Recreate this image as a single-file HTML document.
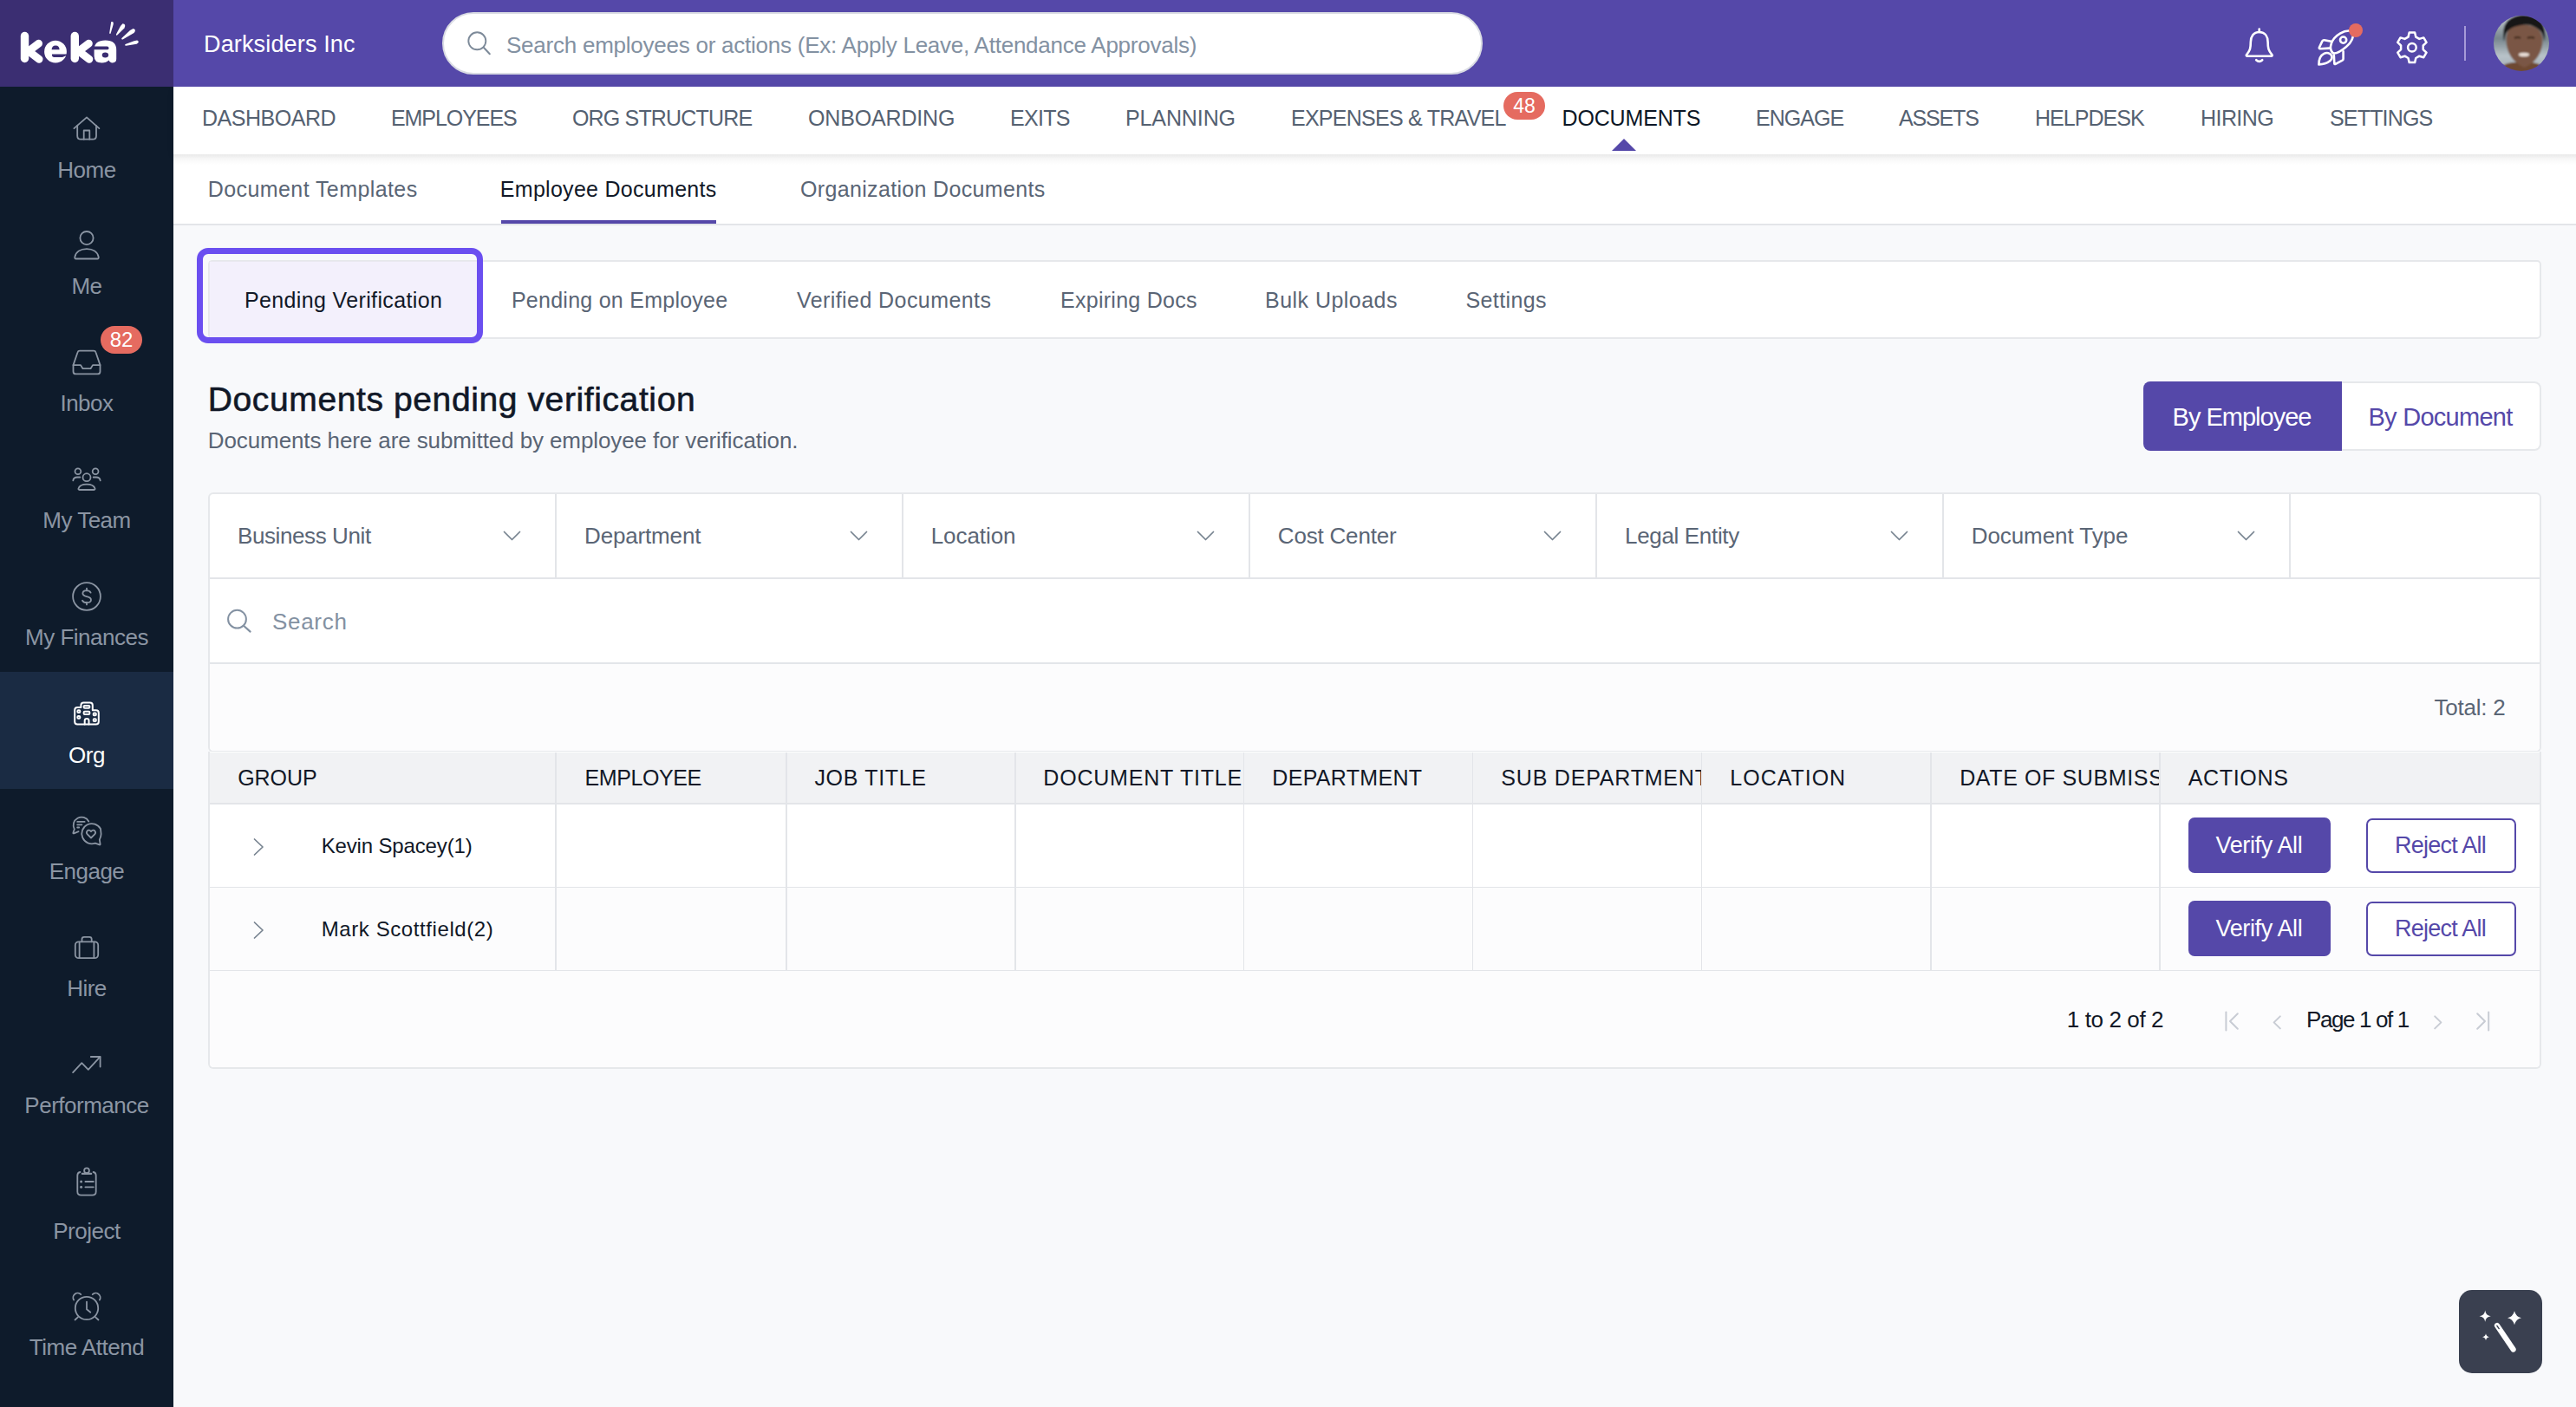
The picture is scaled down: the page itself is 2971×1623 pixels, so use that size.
<!DOCTYPE html>
<html>
<head>
<meta charset="utf-8">
<style>
*{box-sizing:border-box;margin:0;padding:0}
html,body{width:2971px;height:1623px;overflow:hidden}
body{position:relative;background:#f8f9fb;font-family:"Liberation Sans",sans-serif;color:#111827}
.a{position:absolute;white-space:nowrap}
.logo{left:0;top:0;width:200px;height:100px;background:#3b2e72}
.hdr{left:200px;top:0;width:2771px;height:100px;background:#5548a9}
.side{left:0;top:100px;width:200px;height:1523px;background:#0e1b2b}
.si{position:absolute;left:0;width:200px;height:135px}
.si.act{background:#1a2b43}
.si svg{position:absolute;left:80px;top:30px;width:40px;height:40px;overflow:visible}
.lb{position:absolute;left:0;width:200px;text-align:center;font-size:26px;line-height:26px;color:#8b95a3;letter-spacing:-0.5px;white-space:nowrap}
.nav{left:200px;top:100px;width:2771px;height:78px;background:#fff;box-shadow:0 3px 8px rgba(0,0,0,0.07)}
.nv{position:absolute;top:123px;font-size:25px;line-height:25px;color:#4f5b6b;letter-spacing:-0.6px}
.sub{left:200px;top:178px;width:2771px;height:82px;background:#fff;border-bottom:2px solid #e3e5e9}
.st{position:absolute;top:206px;font-size:25px;line-height:25px;color:#556070}
.line{position:absolute;background:#e3e5e9}
</style>
</head>
<body>
<div class="a logo">
<svg width="200" height="100" viewBox="0 0 200 100" style="position:absolute;left:0;top:0">
<g fill="#fff">
<rect x="23.8" y="36.8" width="9.4" height="35.4" rx="4.7"/>
<rect x="81.6" y="36.8" width="9.4" height="35.4" rx="4.7"/>
<ellipse cx="64" cy="59.7" rx="12.9" ry="12.9"/>
<path d="M108.6 57 Q109 46.6 121.5 46.6 Q134.2 46.6 134.2 57.5 V68 Q134.2 72.4 129.8 72.4 Q126.4 72.4 125.6 69.6 Q122.5 72.6 117.5 72.6 Q108.6 72.6 108.6 64.5 Z"/>
</g>
<g fill="none" stroke="#fff" stroke-linecap="round" stroke-linejoin="round" stroke-width="9">
<polyline points="44.5,50.2 33,59 45,68.2"/>
<polyline points="102.3,50.2 90.8,59 102.8,68.2"/>
</g>
<g fill="#3b2e72">
<path d="M59.6 57.3 Q59.8 52.4 64.2 52.4 Q68.4 52.4 68.6 57.3 Z"/>
<path d="M60 62.4 H78 V63.4 L72 65.9 H62 Q60 65.9 60 64.1 Z"/>
<path d="M107 53.4 H123.5 Q125.5 53.6 125.5 55.4 Q125.5 57.3 123.5 57.3 H107 Z"/>
<ellipse cx="121.4" cy="63.6" rx="3.7" ry="3"/>
</g>
<g fill="#fff">
<path d="M128.2 25.2 Q131.5 24.6 130.6 28.6 L127.6 38.4 Q126.6 39.6 126.2 38 Z"/>
<path d="M141.5 27.3 Q145.8 27.6 143.4 32.4 L135.2 40.5 Q133.6 41.2 134 39.4 L139 30 Z"/>
<path d="M153.6 33 Q157.8 34 154.5 38 L141.6 45.4 Q139.4 45.8 140.4 44 L150 35 Z"/>
<path d="M158.2 46.6 Q161.8 48.4 157.6 50.8 L145.4 52.8 Q143.2 52.4 144.6 51 L154.6 47.2 Z"/>
</g>
</svg>
</div>
<div class="a hdr">
<div class="a" style="left:35px;top:37.5px;font-size:27px;line-height:27px;color:#fff;letter-spacing:0.15px">Darksiders Inc</div>
<div class="a" style="left:310px;top:14px;width:1200px;height:72px;border-radius:36px;background:#fff;border:2px solid #d9dbe3"></div>
<svg class="a" style="left:337px;top:34px" width="32" height="32" viewBox="0 0 32 32"><circle cx="13.3" cy="13.3" r="10" fill="none" stroke="#7d8a99" stroke-width="1.9"/><line x1="20.8" y1="20.8" x2="27.8" y2="28.2" stroke="#7d8a99" stroke-width="2" stroke-linecap="round"/></svg>
<div class="a" style="left:384px;top:39px;font-size:26px;line-height:26px;color:#8391a2;letter-spacing:-0.24px">Search employees or actions (Ex: Apply Leave, Attendance Approvals)</div>
<!-- bell -->
<svg class="a" style="left:2385px;top:28px" width="44" height="50" viewBox="0 0 44 50" fill="none" stroke="#fff" stroke-width="2.6" stroke-linecap="round" stroke-linejoin="round">
<line x1="20.7" y1="5.5" x2="20.7" y2="9"/>
<path d="M20.7 9 C13.8 9 10.8 14.5 10.8 20.5 C10.8 27.5 10.2 30 6 35.2 Q5.2 36.8 7 36.8 H34.4 Q36.2 36.8 35.4 35.2 C31.2 30 30.6 27.5 30.6 20.5 C30.6 14.5 27.6 9 20.7 9 Z"/>
<path d="M17.2 41.2 Q20.7 44.6 24.2 41.2"/>
</svg>
<!-- rocket -->
<svg class="a" style="left:2470px;top:28px" width="56" height="52" viewBox="0 0 56 52" fill="none" stroke="#fff" stroke-width="2.6" stroke-linejoin="round" stroke-linecap="round">
<path d="M20.5 33 C15.5 28 18 17 28.9 10.6 C34 7.5 40 7 43.4 8.3 C45.5 14 42 21 36 26 C30 31 24 35 20.5 33 Z"/>
<circle cx="32.6" cy="18.1" r="3.6"/>
<path d="M18.6 19.8 L10.6 18.3 Q9.2 18.1 8.4 19.4 L4.9 26.8 Q4.4 28.2 5.9 28.2 L16.2 27.6"/>
<path d="M32.6 31.2 L32.6 39.8 Q32.5 41 31.5 41.6 L23.6 45.8 Q22.4 46.4 22.3 45.1 L21.8 35.6"/>
<path d="M4.4 46.4 C4.4 41 6 36 10.3 33.9 C13.5 32.3 17.5 33 19 35.8 C20 38.5 19 41 16.8 42.6 C14 45 9.5 46.4 4.4 46.4 Z"/>
</svg>
<div class="a" style="left:2509px;top:27px;width:16px;height:16px;border-radius:8px;background:#e56b60"></div>
<!-- gear -->
<svg class="a" style="left:2562px;top:34px" width="40" height="40" viewBox="0 0 40 40" fill="none" stroke="#fff" stroke-width="2.5" stroke-linejoin="round">
<path d="M16.7 3.5 H23.1 L24.3 8.6 L28.3 10.9 L33.3 9.4 L36.5 14.9 L32.7 18.5 V23.1 L36.5 26.7 L33.3 32.2 L28.3 30.7 L24.3 33 L23.1 38.1 H16.7 L15.5 33 L11.5 30.7 L6.5 32.2 L3.3 26.7 L7.1 23.1 V18.5 L3.3 14.9 L6.5 9.4 L11.5 10.9 L15.5 8.6 Z"/>
<circle cx="19.9" cy="20.8" r="4.8"/>
</svg>
<div class="a" style="left:2642px;top:30px;width:2px;height:40px;background:#a69ad8"></div>
<!-- avatar -->
<svg class="a" style="left:2676px;top:18px" width="64" height="64" viewBox="0 0 64 64">
<defs><clipPath id="av"><circle cx="32" cy="32" r="32"/></clipPath>
<filter id="avb" x="-10%" y="-10%" width="120%" height="120%"><feGaussianBlur stdDeviation="0.8"/></filter><linearGradient id="avbg" x1="0" y1="0" x2="0" y2="1"><stop offset="0" stop-color="#d4dadd"/><stop offset="0.42" stop-color="#76858c"/><stop offset="0.7" stop-color="#b9c3c9"/><stop offset="1" stop-color="#9aa6ad"/></linearGradient></defs>
<g clip-path="url(#av)"><g filter="url(#avb)">
<rect x="-4" y="-4" width="72" height="72" fill="url(#avbg)"/>
<path d="M4 66 Q8 55 22 54 L44 54 Q58 55 62 66 Z" fill="#6e4a30"/>
<path d="M14.5 26 Q15 11 34 10.5 Q54 11 56.5 26 Q57 50 35.5 60 Q14 50 14.5 26 Z" fill="#7a5744"/>
<path d="M12 30 Q9 14 16 6 Q24 -1 34 -1 Q48 -1 55 7 Q61 15 58.7 30 Q57 19 51.8 15.9 Q42 9 33.6 10.8 Q22 12 16.6 17.6 Q13 21 12 30 Z" fill="#141414"/>
<path d="M24 26 Q28 24 31 26 M39 26 Q43 24 47 26" stroke="#3a2418" stroke-width="2" fill="none"/>
<ellipse cx="35" cy="45" rx="6.2" ry="2.3" fill="#e8ddd6"/>
</g></g>
</svg>
</div>
<div class="a side">
<div class="si act" style="top:675px"></div>
<svg class="a" style="left:0;top:-100px" width="200" height="1623" viewBox="0 0 200 1623" fill="none" stroke="#8b95a3" stroke-width="1.8" stroke-linecap="round" stroke-linejoin="round">
<!-- home -->
<path d="M85.4 148.1 L100 135.4 L114.4 148.1"/>
<path d="M89.2 145 V156.7 Q89.2 160.7 93.2 160.7 H107 Q111 160.7 111 156.7 V145"/>
<path d="M96.7 160.7 V150.5 H103.3 V160.7"/>
<!-- me -->
<circle cx="100" cy="274.6" r="7.6"/>
<path d="M87.6 298.5 H112.4 Q114 298.5 113.7 296.5 C112.5 290.5 107 287.2 100 287.2 C93 287.2 87.5 290.5 86.3 296.5 Q86 298.5 87.6 298.5 Z"/>
<!-- inbox -->
<path d="M84.5 421.1 L89.5 406.5 Q90 404.7 92 404.7 H108 Q110 404.7 110.5 406.5 L115.5 421.1 V428.4 Q115.5 431.4 112.5 431.4 H87.5 Q84.5 431.4 84.5 428.4 Z"/>
<path d="M84.5 421.1 H93 L95.5 425.2 H104.5 L107 421.1 H115.5"/>
<!-- my team -->
<circle cx="89.9" cy="543.7" r="3.4"/>
<circle cx="110.1" cy="543.7" r="3.4"/>
<circle cx="100" cy="550.7" r="4.5"/>
<path d="M91.5 565 H108.5 Q109.8 565 109.5 563.5 C108.5 560 105 558.6 100 558.6 C95 558.6 91.5 560 90.5 563.5 Q90.2 565 91.5 565 Z"/>
<path d="M84.3 554.3 Q84.8 550.5 89 550.5 H92.3"/>
<path d="M115.7 554.3 Q115.2 550.5 111 550.5 H107.7"/>
<!-- finances -->
<circle cx="100" cy="688" r="15.9"/>
<path d="M100 678.6 V681.4 M100 694.6 V697.4"/>
<path d="M104.6 683.6 Q103.2 681.2 100 681.2 Q95.4 681.2 95.4 684.6 Q95.4 687.2 100 688.2 Q105 689.3 105 692 Q105 695.2 100 695.2 Q96.3 695.2 95 692.8"/>
<!-- engage -->
<path d="M102.3 947.5 A9.2 9.2 0 1 0 85.8 956.5 L84.4 960.6 Q84.2 961.6 85.2 961.3 L90.6 959.2"/>
<path d="M89.2 947.9 H97.6 M89.2 951.3 H94.4 M89.2 954.5 H91.2"/>
<path d="M116 956 A11.6 11.6 0 1 0 109.8 972.6 L114.6 974.4 Q115.8 974.8 115.6 973.6 L114.8 968.6 Q116.6 965 116.6 962 Z" />
<path d="M105 966.5 L100.8 962.3 Q99 960.3 100.6 958.5 Q102.6 956.6 105 959.2 Q107.4 956.6 109.4 958.5 Q111 960.3 109.2 962.3 Z"/>
<!-- hire -->
<rect x="86.8" y="1086.3" width="26.4" height="18.9" rx="4"/>
<path d="M94.5 1086.3 V1083.3 Q94.5 1080.8 97 1080.8 H103.2 Q105.7 1080.8 105.7 1083.3 V1086.3"/>
<path d="M91.6 1086.6 V1105 M108.4 1086.6 V1105"/>
<!-- performance -->
<polyline points="84.1,1237.1 94.3,1226.2 101.8,1233.9 115.4,1219.2"/>
<path d="M104.8 1219 H115.6 V1230.5"/>
<!-- project -->
<path d="M92.4 1352 Q89.3 1352.4 89.3 1356 V1374.5 Q89.3 1378.7 93.5 1378.7 H106.5 Q110.7 1378.7 110.7 1374.5 V1356 Q110.7 1352.4 107.6 1352"/>
<circle cx="100" cy="1350.2" r="2.9"/>
<path d="M94.8 1353.9 H105.2" stroke-width="2.2"/>
<path d="M98.4 1363 H107.8 M98.4 1369.3 H107.8"/>
<circle cx="93.6" cy="1363" r="1.5" fill="#8b95a3" stroke="none"/>
<circle cx="93.6" cy="1369.3" r="1.5" fill="#8b95a3" stroke="none"/>
<!-- time attend -->
<circle cx="100" cy="1509" r="13.2"/>
<path d="M85.1 1499.5 A5.2 5.2 0 0 1 93.3 1493.2 M114.9 1499.5 A5.2 5.2 0 0 0 106.7 1493.2"/>
<path d="M100 1501.6 V1510.3 L104.3 1513.7"/>
<path d="M86.5 1522.5 L89.9 1519.3 M113.5 1522.5 L110.1 1519.3"/>
</svg>
<svg class="a" style="left:0;top:-100px" width="200" height="1000" viewBox="0 0 200 1000" fill="none" stroke="#fff" stroke-width="2" stroke-linecap="round" stroke-linejoin="round">
<path d="M93.4 816 V813.5 Q93.4 810.5 96.4 810.5 H103.8 Q106.8 810.5 106.8 813.5 V819.2 H110.8 Q113.8 819.2 113.8 822.2 V832.6 Q113.8 835.6 110.8 835.6 H89.2 Q86.2 835.6 86.2 832.6 V819 Q86.2 816 89.2 816 Z"/>
<rect x="96.6" y="814.1" width="6.8" height="2.7" rx="1.2"/>
<rect x="96.6" y="820.7" width="6.8" height="3.2" rx="1.2"/>
<rect x="89.4" y="819.2" width="2.9" height="2.7" rx="1"/>
<rect x="89.4" y="825.9" width="2.9" height="2.9" rx="1"/>
<rect x="107.7" y="822.4" width="3.1" height="2.9" rx="1"/>
<rect x="107.7" y="829.3" width="3.1" height="2.7" rx="1"/>
<path d="M97.7 835.6 V831.3 Q97.7 829 100.1 829 Q102.5 829 102.5 831.3 V835.6"/>
</svg>
<div class="a" style="left:116px;top:275.6px;width:48px;height:32px;border-radius:16px;background:#e56b60;color:#fff;font-size:24px;line-height:32px;text-align:center">82</div>
<div class="lb" style="top:82.5px">Home</div>
<div class="lb" style="top:217px">Me</div>
<div class="lb" style="top:352px">Inbox</div>
<div class="lb" style="top:487px">My Team</div>
<div class="lb" style="top:622.4px">My Finances</div>
<div class="lb" style="top:758px;color:#fff">Org</div>
<div class="lb" style="top:892px">Engage</div>
<div class="lb" style="top:1027px">Hire</div>
<div class="lb" style="top:1162px">Performance</div>
<div class="lb" style="top:1306.8px">Project</div>
<div class="lb" style="top:1440.7px">Time Attend</div>
</div>
<div class="a nav"></div>
<div class="a" style="left:1859px;top:160px;width:0;height:0;border-left:14px solid transparent;border-right:14px solid transparent;border-bottom:14px solid #5548a9"></div>
<div class="a" style="left:1734px;top:106px;width:48px;height:32px;border-radius:16px;background:#e56b60;color:#fff;font-size:23px;line-height:33px;text-align:center">48</div>
<div class="a sub"></div>
<div class="a" style="left:200px;top:178px;width:2771px;height:12px;background:linear-gradient(rgba(0,0,0,0.085),rgba(0,0,0,0.03) 45%,rgba(0,0,0,0))"></div>
<div class="a" style="left:578px;top:254px;width:248px;height:4px;background:#5548a9"></div>
<!-- tab strip -->
<div class="a" style="left:240px;top:300px;width:2691px;height:91px;background:#fff;border:2px solid #e6e8eb;border-radius:5px"></div>
<div class="a" style="left:241px;top:301px;width:309px;height:89px;background:#f3f0fc;border-top:1.5px solid #e9e8ef;border-left:1.5px solid #e9e8ef"></div>
<div class="a" style="left:227px;top:286px;width:329.5px;height:110px;border:7px solid #6b4ff0;border-radius:13px"></div>
<!-- toggle -->
<div class="a" style="left:2472px;top:440px;width:229px;height:80px;background:#5548a9;border-radius:8px 0 0 8px"></div>
<div class="a" style="left:2701px;top:440px;width:230px;height:80px;background:#fff;border:2px solid #e6e8eb;border-left:none;border-radius:0 8px 8px 0"></div>
<!-- filter panel -->
<div class="a" style="left:240px;top:568px;width:2691px;height:300px;background:#fff;border:2px solid #e6e8eb;border-radius:6px"></div>
<div class="line" style="left:242px;top:665.5px;width:2687px;height:2px"></div>
<div class="a" style="left:242px;top:765px;width:2687px;height:101px;background:#fcfcfd;border-radius:0 0 5px 5px"></div>
<div class="line" style="left:242px;top:763.5px;width:2687px;height:2px"></div>
<div class="line" style="left:640px;top:570px;width:2px;height:96px"></div>
<div class="line" style="left:1040px;top:570px;width:2px;height:96px"></div>
<div class="line" style="left:1440px;top:570px;width:2px;height:96px"></div>
<div class="line" style="left:1840px;top:570px;width:2px;height:96px"></div>
<div class="line" style="left:2240px;top:570px;width:2px;height:96px"></div>
<div class="line" style="left:2640px;top:570px;width:2px;height:96px"></div>
<svg class="a" style="left:0;top:0" width="2971" height="1623" viewBox="0 0 2971 1623" fill="none" stroke="#76828f" stroke-width="1.7" stroke-linecap="round" stroke-linejoin="round">
<polyline points="581.5,613.5 590.5,622.5 599.5,613.5"/>
<polyline points="981.5,613.5 990.5,622.5 999.5,613.5"/>
<polyline points="1381.5,613.5 1390.5,622.5 1399.5,613.5"/>
<polyline points="1781.5,613.5 1790.5,622.5 1799.5,613.5"/>
<polyline points="2181.5,613.5 2190.5,622.5 2199.5,613.5"/>
<polyline points="2581.5,613.5 2590.5,622.5 2599.5,613.5"/>
</svg>
<svg class="a" style="left:258px;top:700px" width="36" height="32" viewBox="0 0 36 32"><circle cx="15.5" cy="14.2" r="10.4" fill="none" stroke="#8391a2" stroke-width="2"/><line x1="23" y1="21.8" x2="30.6" y2="28.6" stroke="#8391a2" stroke-width="2.2" stroke-linecap="round"/></svg>
<!-- table -->
<div class="a" style="left:240px;top:867px;width:2691px;height:366px;background:#fff;border:2px solid #e6e8eb;border-top:none;border-radius:0 0 6px 6px"></div>
<div class="a" style="left:242px;top:867.5px;width:2687px;height:59px;background:#f1f2f4"></div>
<div class="a" style="left:242px;top:1023px;width:2687px;height:208px;background:#fcfcfd;border-radius:0 0 5px 5px"></div>
<div class="line" style="left:242px;top:926px;width:2687px;height:1.5px"></div>
<div class="line" style="left:242px;top:1022.5px;width:2687px;height:1.5px"></div>
<div class="line" style="left:242px;top:1118.5px;width:2687px;height:1.5px"></div>
<div class="line" style="left:640px;top:867.5px;width:1.5px;height:252px"></div>
<div class="line" style="left:906px;top:867.5px;width:1.5px;height:252px"></div>
<div class="line" style="left:1170px;top:867.5px;width:1.5px;height:252px"></div>
<div class="line" style="left:1433.5px;top:867.5px;width:1.5px;height:252px"></div>
<div class="line" style="left:1697.5px;top:867.5px;width:1.5px;height:252px"></div>
<div class="line" style="left:1961.5px;top:867.5px;width:1.5px;height:252px"></div>
<div class="line" style="left:2226px;top:867.5px;width:1.5px;height:252px"></div>
<div class="line" style="left:2490px;top:867.5px;width:1.5px;height:252px"></div>
<svg class="a" style="left:0;top:0" width="2971" height="1623" viewBox="0 0 2971 1623" fill="none" stroke-linecap="round" stroke-linejoin="round">
<polyline points="293.5,968 303,977 293.5,986" stroke="#76828f" stroke-width="1.7"/>
<polyline points="293.5,1064 303,1073 293.5,1082" stroke="#76828f" stroke-width="1.7"/>
<g stroke="#c8ccd4" stroke-width="2">
<line x1="2567.4" y1="1167.4" x2="2567.4" y2="1188.6"/>
<polyline points="2580.8,1169.2 2572,1178 2580.8,1186.8"/>
<polyline points="2629.8,1172.4 2622.6,1179.4 2629.8,1186.4"/>
<polyline points="2808.2,1172.4 2815.4,1179.4 2808.2,1186.4"/>
<polyline points="2857.2,1169.2 2866,1178 2857.2,1186.8"/>
<line x1="2870.2" y1="1167.4" x2="2870.2" y2="1188.6"/>
</g>
</svg>
<div class="a" style="left:2524px;top:943px;width:164px;height:63.5px;background:#5548a9;border-radius:7px"></div>
<div class="a" style="left:2728.5px;top:943.5px;width:173px;height:63px;border:2px solid #5548a9;border-radius:7px;background:#fff"></div>
<div class="a" style="left:2524px;top:1039px;width:164px;height:63.5px;background:#5548a9;border-radius:7px"></div>
<div class="a" style="left:2728.5px;top:1039.5px;width:173px;height:63px;border:2px solid #5548a9;border-radius:7px;background:#fff"></div>
<!-- fab -->
<div class="a" style="left:2836px;top:1488px;width:96px;height:96px;border-radius:15px;background:#3a4050"></div>
<svg class="a" style="left:2836px;top:1488px" width="96" height="96" viewBox="0 0 96 96">
<g fill="#fff">
<path d="M30.2 23.6 Q30.8 29.6 36.8 30.2 Q30.8 30.8 30.2 36.8 Q29.6 30.8 23.6 30.2 Q29.6 29.6 30.2 23.6 Z"/>
<path d="M64 24.3 Q65.5 30.8 72 32.3 Q65.5 33.8 64 40.3 Q62.5 33.8 56 32.3 Q62.5 30.8 64 24.3 Z"/>
<path d="M31 50.2 Q31.5 53.7 35 54.2 Q31.5 54.7 31 58.2 Q30.5 54.7 27 54.2 Q30.5 53.7 31 50.2 Z"/>
</g>
<line x1="44" y1="41" x2="62.6" y2="68.6" stroke="#fff" stroke-width="6.2" stroke-linecap="round"/>
<line x1="43.9" y1="41.3" x2="46.2" y2="44.6" stroke="#3a4050" stroke-width="1.4" stroke-linecap="round"/>
</svg>
<!--TEXT-->
<div class="a" style="left:233.0px;top:123.7px;font-size:25px;line-height:25px;color:#556171;letter-spacing:-0.48px">DASHBOARD</div>
<div class="a" style="left:451.0px;top:123.7px;font-size:25px;line-height:25px;color:#556171;letter-spacing:-1.07px">EMPLOYEES</div>
<div class="a" style="left:659.9px;top:123.7px;font-size:25px;line-height:25px;color:#556171;letter-spacing:-0.81px">ORG STRUCTURE</div>
<div class="a" style="left:932.0px;top:123.7px;font-size:25px;line-height:25px;color:#556171;letter-spacing:-0.16px">ONBOARDING</div>
<div class="a" style="left:1165.0px;top:123.7px;font-size:25px;line-height:25px;color:#556171;letter-spacing:-0.70px">EXITS</div>
<div class="a" style="left:1298.0px;top:123.7px;font-size:25px;line-height:25px;color:#556171;letter-spacing:-0.11px">PLANNING</div>
<div class="a" style="left:1489.0px;top:123.7px;font-size:25px;line-height:25px;color:#556171;letter-spacing:-0.74px">EXPENSES &amp; TRAVEL</div>
<div class="a" style="left:1801.5px;top:123.7px;font-size:25px;line-height:25px;color:#0d1726;letter-spacing:-0.16px">DOCUMENTS</div>
<div class="a" style="left:2025.0px;top:123.7px;font-size:25px;line-height:25px;color:#556171;letter-spacing:-0.96px">ENGAGE</div>
<div class="a" style="left:2190.0px;top:123.7px;font-size:25px;line-height:25px;color:#556171;letter-spacing:-1.16px">ASSETS</div>
<div class="a" style="left:2347.0px;top:123.7px;font-size:25px;line-height:25px;color:#556171;letter-spacing:-0.97px">HELPDESK</div>
<div class="a" style="left:2538.0px;top:123.7px;font-size:25px;line-height:25px;color:#556171;letter-spacing:-0.56px">HIRING</div>
<div class="a" style="left:2687.0px;top:123.7px;font-size:25px;line-height:25px;color:#556171;letter-spacing:-0.83px">SETTINGS</div>
<div class="a" style="left:239.8px;top:205.9px;font-size:25px;line-height:25px;color:#5a6575;letter-spacing:0.41px">Document Templates</div>
<div class="a" style="left:576.8px;top:205.9px;font-size:25px;line-height:25px;color:#111827;letter-spacing:0.29px">Employee Documents</div>
<div class="a" style="left:923.0px;top:205.9px;font-size:25px;line-height:25px;color:#5a6575;letter-spacing:0.34px">Organization Documents</div>
<div class="a" style="left:282.0px;top:334.1px;font-size:25px;line-height:25px;color:#111827;letter-spacing:0.36px">Pending Verification</div>
<div class="a" style="left:589.9px;top:334.1px;font-size:25px;line-height:25px;color:#5a6575;letter-spacing:0.26px">Pending on Employee</div>
<div class="a" style="left:919.0px;top:334.1px;font-size:25px;line-height:25px;color:#5a6575;letter-spacing:0.42px">Verified Documents</div>
<div class="a" style="left:1223.0px;top:334.1px;font-size:25px;line-height:25px;color:#5a6575;letter-spacing:0.27px">Expiring Docs</div>
<div class="a" style="left:1459.0px;top:334.1px;font-size:25px;line-height:25px;color:#5a6575;letter-spacing:0.47px">Bulk Uploads</div>
<div class="a" style="left:1690.5px;top:334.1px;font-size:25px;line-height:25px;color:#5a6575;letter-spacing:0.39px">Settings</div>
<div class="a" style="left:239.8px;top:440.9px;font-size:39px;line-height:39px;color:#111827;letter-spacing:0.61px;-webkit-text-stroke:0.6px #111827">Documents pending verification</div>
<div class="a" style="left:239.8px;top:494.9px;font-size:26px;line-height:26px;color:#5a6575;letter-spacing:-0.10px">Documents here are submitted by employee for verification.</div>
<div class="a" style="left:2505.6px;top:466.7px;font-size:29px;line-height:29px;color:#fff;letter-spacing:-1.00px">By Employee</div>
<div class="a" style="left:2731.5px;top:466.7px;font-size:29px;line-height:29px;color:#5548a9;letter-spacing:-0.73px">By Document</div>
<div class="a" style="left:274.0px;top:605.2px;font-size:26px;line-height:26px;color:#5a6575;letter-spacing:-0.40px">Business Unit</div>
<div class="a" style="left:674.1px;top:605.2px;font-size:26px;line-height:26px;color:#5a6575;letter-spacing:-0.17px">Department</div>
<div class="a" style="left:1073.7px;top:605.2px;font-size:26px;line-height:26px;color:#5a6575;letter-spacing:-0.07px">Location</div>
<div class="a" style="left:1473.8px;top:605.2px;font-size:26px;line-height:26px;color:#5a6575;letter-spacing:-0.19px">Cost Center</div>
<div class="a" style="left:1874.0px;top:605.2px;font-size:26px;line-height:26px;color:#5a6575;letter-spacing:-0.33px">Legal Entity</div>
<div class="a" style="left:2273.7px;top:605.2px;font-size:26px;line-height:26px;color:#5a6575;letter-spacing:-0.07px">Document Type</div>
<div class="a" style="left:313.9px;top:703.9px;font-size:26px;line-height:26px;color:#8391a2;letter-spacing:0.74px">Search</div>
<div class="a" style="left:2807.6px;top:803.3px;font-size:26px;line-height:26px;color:#5a6575;letter-spacing:-0.23px">Total: 2</div>
<div class="a" style="left:274.2px;top:884.9px;font-size:25px;line-height:25px;color:#111827;letter-spacing:-0.05px">GROUP</div>
<div class="a" style="left:674.6px;top:884.9px;font-size:25px;line-height:25px;color:#111827;letter-spacing:-0.43px">EMPLOYEE</div>
<div class="a" style="left:939.4px;top:884.9px;font-size:25px;line-height:25px;color:#111827;letter-spacing:0.67px">JOB TITLE</div>
<div class="a" style="left:1203.3px;top:884.9px;font-size:25px;line-height:25px;color:#111827;letter-spacing:0.80px;width:229.7px;overflow:hidden">DOCUMENT TITLE</div>
<div class="a" style="left:1467.3px;top:884.9px;font-size:25px;line-height:25px;color:#111827;letter-spacing:0.32px">DEPARTMENT</div>
<div class="a" style="left:1731.3px;top:884.9px;font-size:25px;line-height:25px;color:#111827;letter-spacing:0.80px;width:230.7px;overflow:hidden">SUB DEPARTMENT</div>
<div class="a" style="left:1995.3px;top:884.9px;font-size:25px;line-height:25px;color:#111827;letter-spacing:0.99px">LOCATION</div>
<div class="a" style="left:2260.2px;top:884.9px;font-size:25px;line-height:25px;color:#111827;letter-spacing:0.62px;width:229.8px;overflow:hidden">DATE OF SUBMISSION</div>
<div class="a" style="left:2523.7px;top:884.9px;font-size:25px;line-height:25px;color:#111827;letter-spacing:0.68px">ACTIONS</div>
<div class="a" style="left:370.7px;top:963.7px;font-size:24px;line-height:24px;color:#111827;letter-spacing:-0.15px">Kevin Spacey(1)</div>
<div class="a" style="left:370.7px;top:1059.7px;font-size:24px;line-height:24px;color:#111827;letter-spacing:0.59px">Mark Scottfield(2)</div>
<div class="a" style="left:2555.5px;top:962.3px;font-size:27px;line-height:27px;color:#fff;letter-spacing:-0.37px">Verify All</div>
<div class="a" style="left:2762.0px;top:962.3px;font-size:27px;line-height:27px;color:#5548a9;letter-spacing:-0.76px">Reject All</div>
<div class="a" style="left:2555.5px;top:1058.3px;font-size:27px;line-height:27px;color:#fff;letter-spacing:-0.37px">Verify All</div>
<div class="a" style="left:2762.0px;top:1058.3px;font-size:27px;line-height:27px;color:#5548a9;letter-spacing:-0.76px">Reject All</div>
<div class="a" style="left:2383.8px;top:1162.9px;font-size:26px;line-height:26px;color:#111827;letter-spacing:-0.39px">1 to 2 of 2</div>
<div class="a" style="left:2660.0px;top:1162.9px;font-size:26px;line-height:26px;color:#111827;letter-spacing:-1.38px">Page 1 of 1</div>
<!--/TEXT-->
</body>
</html>
